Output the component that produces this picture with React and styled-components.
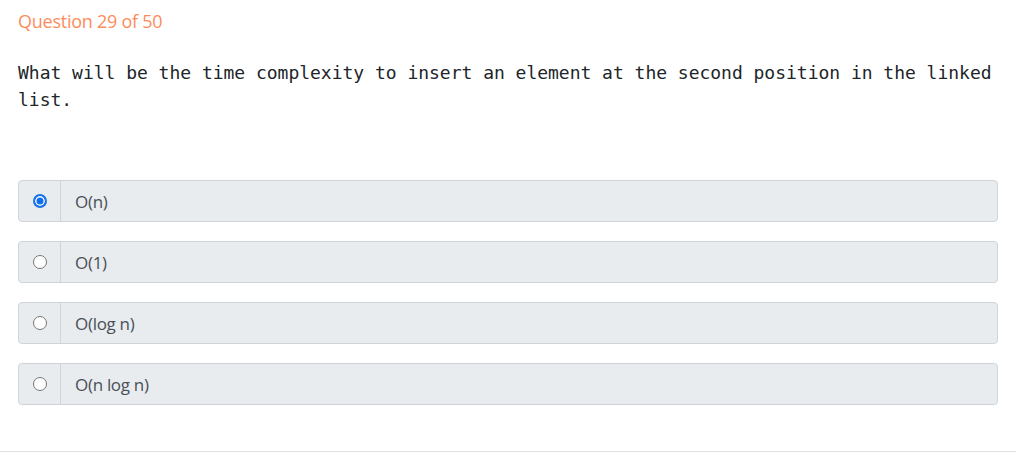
import React, { useState } from 'react';
import styled, { createGlobalStyle } from 'styled-components';

const GlobalStyle = createGlobalStyle`
  body {
    margin: 0;
    background: #fff;
    font-family: 'Open Sans', 'Liberation Sans', sans-serif;
  }
`;

const Page = styled.div`
  width: 1018px;
  height: 455px;
  box-sizing: border-box;
  padding: 0 20px 0 18px;
  position: relative;
`;

const Counter = styled.div`
  color: #fd8c5c;
  font-size: 18px;
  padding-top: 9px;
  line-height: 25px;
  letter-spacing: -0.25px;
`;

const QuestionText = styled.pre`
  margin: 25px 0 0;
  font-family: 'DejaVu Sans Mono', 'Liberation Mono', monospace;
  font-size: 18px;
  line-height: 27px;
  color: #212529;
  white-space: pre-wrap;
  letter-spacing: -0.02px;
`;

const Options = styled.div`
  margin-top: 67px;
  display: flex;
  flex-direction: column;
  gap: 19px;
`;

const Option = styled.label`
  display: flex;
  height: 42px;
  box-sizing: border-box;
  border: 1px solid #ced4da;
  border-radius: 4px;
  background: #e9ecef;
  cursor: pointer;
`;

const Addon = styled.span`
  width: 41px;
  flex: none;
  display: flex;
  align-items: center;
  justify-content: center;
  border-right: 1px solid #ced4da;
`;

const Radio = styled.span`
  width: 14px;
  height: 14px;
  box-sizing: border-box;
  border-radius: 50%;
  border: ${p => (p.checked ? '2px solid #1a73e8' : '1px solid #767676')};
  background: ${p => (p.checked ? '#0b6ff2' : '#fff')};
  box-shadow: ${p => (p.checked ? 'inset 0 0 0 1.5px #fff' : 'none')};
`;

const Label = styled.span`
  display: flex;
  align-items: center;
  padding-left: 14px;
  font-size: 17px;
  color: #495057;
  letter-spacing: -0.3px;
`;

const Divider = styled.div`
  position: absolute;
  left: 0;
  right: 2px;
  top: 451px;
  border-top: 1px solid #dee2e6;
`;

const answers = ['O(n)', 'O(1)', 'O(log n)', 'O(n log n)'];

export default function App() {
  const [picked, setPicked] = useState(0);
  return (
    <Page>
      <GlobalStyle />
      <Counter>Question 29 of 50</Counter>
      <QuestionText>What will be the time complexity to insert an element at the second position in the linked list.</QuestionText>
      <Options>
        {answers.map((a, i) => (
          <Option key={a} onClick={() => setPicked(i)}>
            <Addon>
              <Radio checked={picked === i} />
            </Addon>
            <Label>{a}</Label>
          </Option>
        ))}
      </Options>
      <Divider />
    </Page>
  );
}
